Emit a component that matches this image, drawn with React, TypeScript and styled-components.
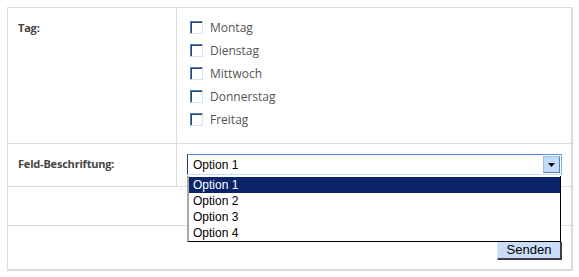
import React from "react";
import styled, { createGlobalStyle } from "styled-components";

const Global = createGlobalStyle`
  html, body { margin: 0; padding: 0; background: #fff; }
  body { font-family: "Open Sans", "Liberation Sans", sans-serif; }
`;

const Page = styled.div`
  padding: 7px;
  width: 566px;
`;

const Form = styled.div`
  display: grid;
  grid-template-columns: 169px 397px;
  grid-template-rows: 136px 43px 39px 43px;
  border: 1px solid #dcdcdc;
  border-right: 2px solid #dcdcdc;
  border-bottom: 2px solid #dcdcdc;
  position: relative;
`;

const LabelCell = styled.div`
  border-right: 1px solid #dcdcdc;
  border-bottom: 1px solid #dcdcdc;
  padding: 12px 0 0 10px;
  font-size: 11px;
  font-weight: 700;
  letter-spacing: -0.2px;
  color: #444;
`;

const FieldCell = styled.div<{ $pt: number }>`
  border-bottom: 1px solid #dcdcdc;
  padding: ${(p) => p.$pt}px 12px 0 10px;
  position: relative;
`;

const WideCell = styled.div<{ $last?: boolean }>`
  grid-column: 1 / span 2;
  border-bottom: ${(p) => (p.$last ? "none" : "1px solid #dcdcdc")};
  display: flex;
  justify-content: flex-end;
  align-items: flex-start;
  padding: 16px 12px 0 0;
`;

const CheckList = styled.div`
  display: flex;
  flex-direction: column;
  gap: 10px;
  padding-left: 3px;
`;

const CheckRow = styled.label`
  display: flex;
  align-items: center;
  gap: 7px;
  height: 13px;
  font-size: 12px;
  color: #555;
`;

const Box = styled.span`
  box-sizing: border-box;
  width: 13px;
  height: 13px;
  border-top: 1px solid #3f86de;
  border-left: 1px solid #3f86de;
  border-right: 1px solid #d3e3f7;
  border-bottom: 1px solid #d3e3f7;
  box-shadow: inset 1px 1px 0 #404040;
  background: #fff;
`;

const Select = styled.div`
  box-sizing: border-box;
  height: 21px;
  display: flex;
  align-items: center;
  border-top: 1px solid #4d90dc;
  border-left: 1px solid #1f3f80;
  border-right: 1px solid #7fb0e8;
  border-bottom: 1px solid #c8dcf4;
  background: #fff;
  font-family: "Liberation Sans", Tahoma, sans-serif;
  font-size: 12px;
  color: #000;
  padding-left: 5px;
`;

const SelectText = styled.span`
  flex: 1;
`;

const Arrow = styled.span`
  box-sizing: border-box;
  width: 17px;
  height: 17px;
  margin-right: 1px;
  background: #c6dbf7;
  border: 1px solid #9fbde6;
  border-right-color: #5a7fb8;
  border-bottom-color: #5a7fb8;
  display: flex;
  align-items: center;
  justify-content: center;
`;

const List = styled.ul`
  position: absolute;
  left: 10px;
  top: 32px;
  width: 374px;
  margin: 0;
  padding: 1px 0 0 0;
  list-style: none;
  box-sizing: border-box;
  background: #fff;
  border-left: 2px solid #a8a8a8;
  border-right: 1px solid #000;
  border-bottom: 1px solid #000;
  font-family: "Liberation Sans", Tahoma, sans-serif;
  font-size: 12px;
  z-index: 2;
`;

const Item = styled.li<{ $active?: boolean }>`
  height: 16px;
  line-height: 16px;
  padding-left: 4px;
  background: ${(p) => (p.$active ? "#0a246a" : "#fff")};
  color: ${(p) => (p.$active ? "#fff" : "#000")};
`;

const Button = styled.button`
  box-sizing: border-box;
  width: 65px;
  height: 18px;
  padding: 0;
  background: #c9ddf8;
  border: none;
  border-right: 2px solid #404040;
  border-bottom: 2px solid #404040;
  border-left: 1px solid #dbe8fb;
  font-family: "Liberation Sans", Tahoma, sans-serif;
  font-size: 13px;
  line-height: 14px;
  color: #000;
`;

const days = ["Montag", "Dienstag", "Mittwoch", "Donnerstag", "Freitag"];
const options = ["Option 1", "Option 2", "Option 3", "Option 4"];

export default function App() {
  return (
    <Page>
      <Global />
      <Form>
        <LabelCell>Tag:</LabelCell>
        <FieldCell $pt={13}>
          <CheckList>
            {days.map((d) => (
              <CheckRow key={d}>
                <Box />
                {d}
              </CheckRow>
            ))}
          </CheckList>
        </FieldCell>
        <LabelCell>Feld-Beschriftung:</LabelCell>
        <FieldCell $pt={10}>
          <Select>
            <SelectText>Option 1</SelectText>
            <Arrow>
              <svg width="7" height="4" viewBox="0 0 7 4">
                <path d="M0 0h7L3.5 4z" fill="#000" />
              </svg>
            </Arrow>
          </Select>
          <List>
            {options.map((o, i) => (
              <Item key={o} $active={i === 0}>
                {o}
              </Item>
            ))}
          </List>
        </FieldCell>
        <WideCell />
        <WideCell $last>
          <Button>Senden</Button>
        </WideCell>
      </Form>
    </Page>
  );
}
